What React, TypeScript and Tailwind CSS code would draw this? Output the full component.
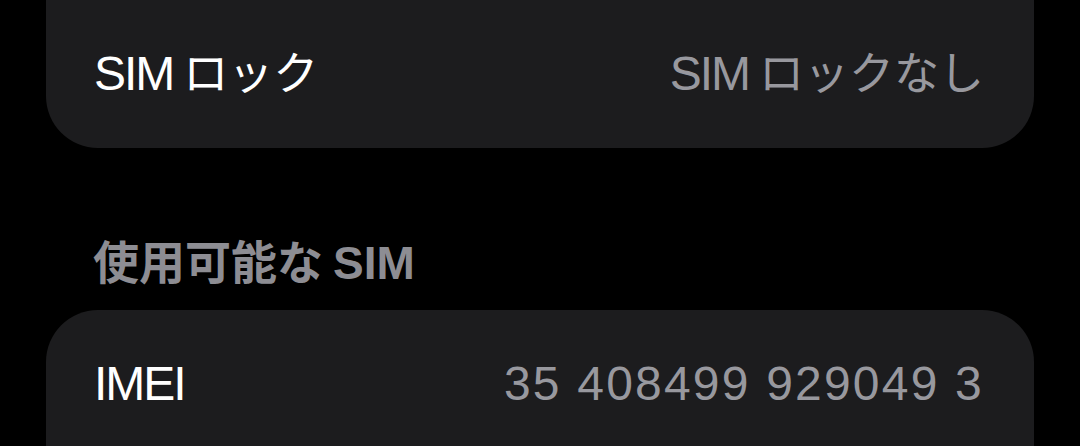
const font = {
  fontFamily: '"Liberation Sans", "Noto Sans CJK JP", sans-serif',
};

// latin runs in SF-style are a little tighter than Liberation Sans
const Latin = ({ children }: { children: React.ReactNode }) => (
  <span className="tracking-[-2px]">{children}</span>
);

const Kana = ({ children }: { children: React.ReactNode }) => (
  <span className="ml-[10px] text-[45px]">{children}</span>
);

type RowProps = { label: React.ReactNode; value: React.ReactNode };

const Row = ({ label, value }: RowProps) => (
  <div className="h-[148px] flex items-center justify-between pl-[48px] pr-[50px]">
    <span className="text-[48px] leading-none text-white">{label}</span>
    <span className="text-[48px] leading-none text-[#98989e]">{value}</span>
  </div>
);

export default function App() {
  return (
    <div
      className="w-[1080px] h-[446px] overflow-hidden bg-black flex flex-col"
      style={font}
    >
      <div className="mx-[46px] bg-[#1c1c1e] rounded-b-[52px] shrink-0">
        <Row
          label={
            <>
              <Latin>SIM</Latin>
              <Kana>ロック</Kana>
            </>
          }
          value={
            <>
              <Latin>SIM</Latin>
              <Kana>ロックなし</Kana>
            </>
          }
        />
      </div>

      <div className="shrink-0 pt-[89px] pb-[21px] pl-[93px]">
        <span className="block text-[46px] leading-[52px] font-semibold text-[#8d8d93]">
          使用可能な<span className="ml-[10px]">SIM</span>
        </span>
      </div>

      <div className="mx-[46px] bg-[#1c1c1e] rounded-t-[52px] shrink-0">
        <Row
          label={<Latin>IMEI</Latin>}
          value={<span className="tracking-[2.2px]">35 408499 929049 3</span>}
        />
      </div>
    </div>
  );
}
